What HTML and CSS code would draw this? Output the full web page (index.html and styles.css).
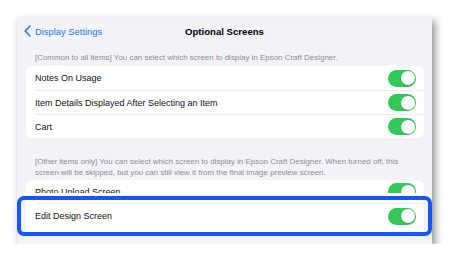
FILE: index.html
```html
<!DOCTYPE html>
<html lang="en">
<head>
    <meta charset="UTF-8">
    <title>Optional Screens</title>
    <link rel="stylesheet" href="styles.css">
</head>
<body>
    <div class="panel">
        <div class="nav">
            <a class="back">
                <svg width="7" height="12" viewBox="0 0 7 12"><path d="M6 1 L1.2 6 L6 11" fill="none" stroke="#1a7cf5" stroke-width="1.6" stroke-linecap="round" stroke-linejoin="round"/></svg>
                Display Settings
            </a>
            <div class="title">Optional Screens</div>
        </div>

        <p class="caption">[Common to all items] You can select which screen to display in Epson Craft Designer.</p>
        <div class="group">
            <div class="row"><span>Notes On Usage</span><span class="toggle"></span></div>
            <div class="row"><span>Item Details Displayed After Selecting an Item</span><span class="toggle"></span></div>
            <div class="row"><span>Cart</span><span class="toggle"></span></div>
        </div>

        <p class="caption second">[Other items only] You can select which screen to display in Epson Craft Designer. When turned off, this screen will be skipped, but you can still view it from the final image preview screen.</p>
        <div class="group">
            <div class="row"><span>Photo Upload Screen</span><span class="toggle"></span></div>
            <div class="row"><span>Edit Design Screen</span><span class="toggle"></span></div>
        </div>

        <div class="highlight">
            <div class="hl-card">
                <div class="row"><span>Edit Design Screen</span><span class="toggle"></span></div>
            </div>
        </div>
    </div>
</body>
</html>
```

FILE: styles.css
```css
body {
    margin: 0;
    padding: 17px 0 0 17px;
    background: #fff;
    font-family: "Liberation Sans", Arial, sans-serif;
}
.panel {
    position: relative;
    width: 415px;
    height: 227px;
    background: #f2f2f7;
    box-shadow: 3px 4px 8px rgba(0, 0, 0, 0.45);
}
.nav {
    position: relative;
    height: 27px;
    display: flex;
    align-items: center;
    justify-content: center;
}
.back {
    position: absolute;
    left: 7px;
    top: 8px;
    display: flex;
    align-items: center;
    gap: 4px;
    color: #1a7cf5;
    font-size: 9.4px;
}
.title {
    font-size: 9.6px;
    font-weight: bold;
    color: #000;
    padding-top: 1px;
}
.caption {
    margin: 8px 0 3px;
    padding: 0 26px 0 18px;
    font-size: 7.95px;
    line-height: 11px;
    color: #8e8e93;
}
.caption.second {
    margin-top: 18px;
    margin-bottom: 1.5px;
}
.group {
    margin: 0 8px 0 9px;
    background: #fff;
    border-radius: 6px;
    overflow: hidden;
}
.row {
    height: 24px;
    margin-left: 9px;
    padding-right: 8px;
    display: flex;
    align-items: center;
    justify-content: space-between;
    font-size: 9px;
    color: #111;
}
.row + .row {
    border-top: 1px solid #ececf0;
    height: 23px;
}
.toggle {
    position: relative;
    width: 28px;
    height: 17px;
    border-radius: 9px;
    background: #34c759;
}
.toggle::after {
    content: "";
    position: absolute;
    right: 1.5px;
    top: 1.5px;
    width: 14px;
    height: 14px;
    border-radius: 50%;
    background: #fff;
    box-shadow: 0 1px 2px rgba(0, 0, 0, 0.2);
}
.highlight {
    position: absolute;
    left: 0;
    top: 179px;
    width: 415px;
    height: 40px;
    box-sizing: border-box;
    border: 4px solid #1557ff;
    border-radius: 7px;
    background: #f2f2f7;
    box-shadow: 0 -3px 0 #fff;
    padding: 0 4px 0 5px;
}
.hl-card {
    background: #fff;
    height: 100%;
    padding-top: 3px;
    box-sizing: border-box;
}
.hl-card .row {
    border-top: 1px solid #ececf0;
    height: 24px;
}
```
